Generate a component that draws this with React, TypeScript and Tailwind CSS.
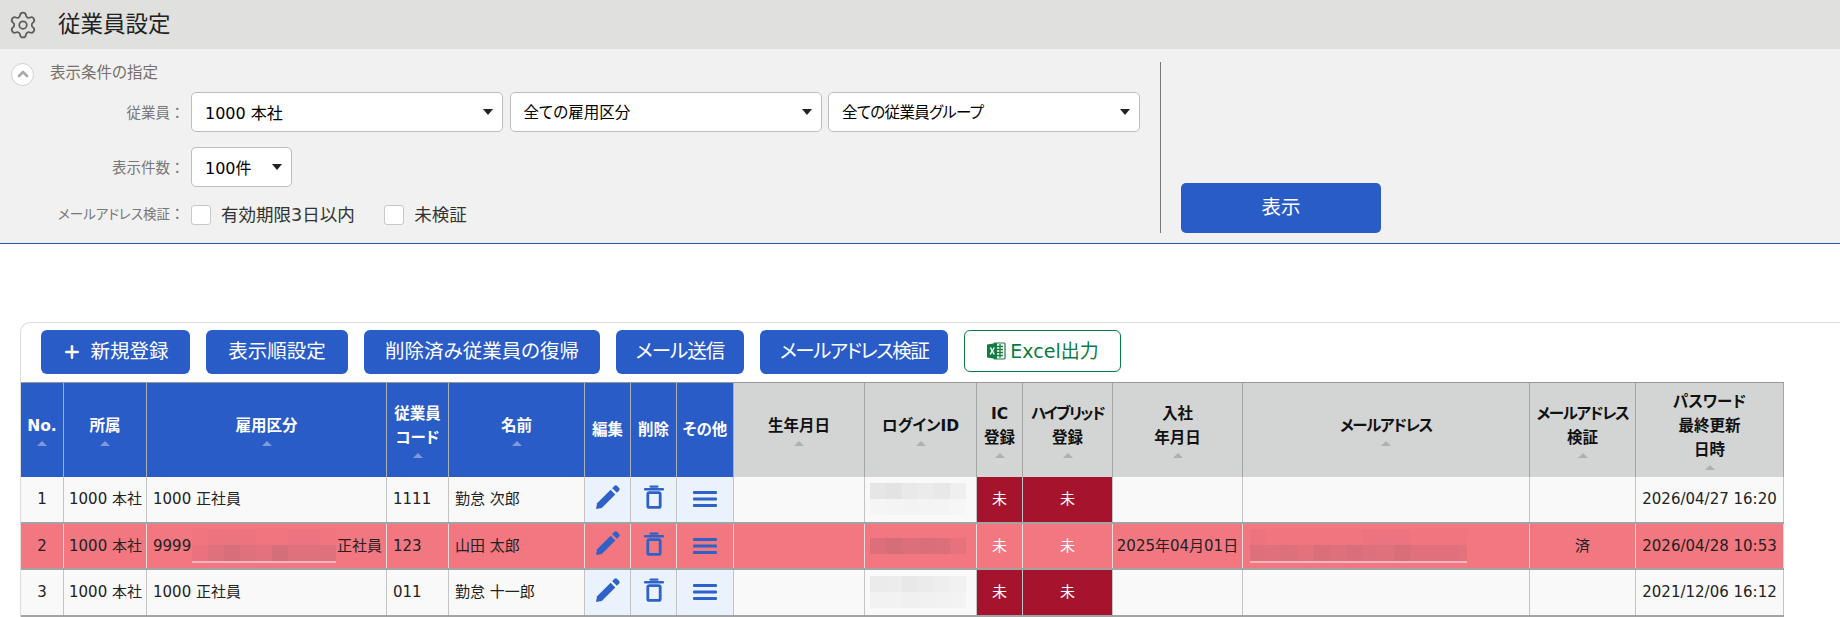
import React from 'react';
import { Settings, ChevronUp, Plus } from 'lucide-react';

// ─── Data ─────────────────────────────────────────────────────────────────────

type Col = { w: string; label: string[]; head: 'blue' | 'gray'; sort?: boolean; track?: string };

const columns: Col[] = [
  { w: 'w-[43px]', label: ['No.'], head: 'blue', sort: true },
  { w: 'w-[83px]', label: ['所属'], head: 'blue', sort: true },
  { w: 'w-[240px]', label: ['雇用区分'], head: 'blue', sort: true },
  { w: 'w-[62px]', label: ['従業員', 'コード'], head: 'blue', sort: true },
  { w: 'w-[136px]', label: ['名前'], head: 'blue', sort: true },
  { w: 'w-[46px]', label: ['編集'], head: 'blue' },
  { w: 'w-[46px]', label: ['削除'], head: 'blue' },
  { w: 'w-[57px]', label: ['その他'], head: 'blue' },
  { w: 'w-[131px]', label: ['生年月日'], head: 'gray', sort: true },
  { w: 'w-[112px]', label: ['ログインID'], head: 'gray', sort: true },
  { w: 'w-[46px]', label: ['IC', '登録'], head: 'gray', sort: true },
  { w: 'w-[90px]', label: ['ハイブリッド', '登録'], head: 'gray', sort: true, track: 'tracking-[-1.7px]' },
  { w: 'w-[130px]', label: ['入社', '年月日'], head: 'gray', sort: true },
  { w: 'w-[287px]', label: ['メールアドレス'], head: 'gray', sort: true, track: 'tracking-[-1.3px]' },
  { w: 'w-[106px]', label: ['メールアドレス', '検証'], head: 'gray', sort: true, track: 'tracking-[-1.3px]' },
  { w: 'w-[148px]', label: ['パスワード', '最終更新', '日時'], head: 'gray', sort: true },
];

const rows = [
  {
    no: '1', org: '1000 本社', kind: '1000 正社員', code: '1111', name: '勤怠 次郎', hired: '', verified: '',
    updated: '2026/04/27 16:20', alert: false,
    login: [
      ['#e6e6e6', '#e3e3e3', '#e9e9e9', '#ebebeb', '#e8e8e8', '#efefef'],
      ['#f5f5f5', '#f4f4f4', '#f3f3f3', '#f4f4f4', '#f4f4f4', '#f6f6f6'],
    ],
  },
  {
    no: '2', org: '1000 本社', kind: '9999', code: '123', name: '山田 太郎', hired: '2025年04月01日', verified: '済',
    updated: '2026/04/28 10:53', alert: true,
    login: [['#dd6f7a', '#d66e78', '#dc6f7a', '#d96f79', '#db6f7a', '#e5727c']],
  },
  {
    no: '3', org: '1000 本社', kind: '1000 正社員', code: '011', name: '勤怠 十一郎', hired: '', verified: '',
    updated: '2021/12/06 16:12', alert: false,
    login: [
      ['#ebebeb', '#ececec', '#e8e8e8', '#ebebeb', '#eeeeee', '#f1f1f1'],
      ['#f2f2f2', '#f2f2f2', '#f0f0f0', '#f1f1f1', '#f2f2f2', '#f3f3f3'],
    ],
  },
];

// ─── Small parts ──────────────────────────────────────────────────────────────

function Select({ label, w = 'w-[312px]', size = 'text-[15.5px]' }: { label: string; w?: string; size?: string }) {
  return (
    <div className={`${w} h-10 flex items-center justify-between pl-[13px] pr-[9px] bg-white border border-[#bdbdbd] rounded-[5px] ${size} text-black`}>
      <span className="pt-[3px]">{label}</span>
      <span className="w-0 h-0 border-x-[5px] border-x-transparent border-t-[6px] border-t-[#222]" />
    </div>
  );
}

// The full-width colon keeps its own width, palt would pull it in
function FieldLabel({ text, size = 'text-[14.5px] pt-[3px]' }: { text: string; size?: string }) {
  return (
    <span className={`w-[173.5px] text-right ${size} text-[#777]`}>
      {text}
      <span className="text-[14.5px] [font-feature-settings:normal]">：</span>
    </span>
  );
}

function Check({ label, className }: { label: string; className?: string }) {
  return (
    <div className={`flex items-center gap-[10px] ${className ?? ''}`}>
      <span className="w-5 h-5 bg-white border border-[#c8c8c8] rounded-[3px]" />
      <span className="text-[17.5px] text-[#333]">{label}</span>
    </div>
  );
}

// Blurred-out values: rows of 16px swatches
function Mosaic({ lines }: { lines: string[][] }) {
  return (
    <span className="flex flex-col">
      {lines.map((line, i) => (
        <span key={i} className="flex h-4">
          {line.map((c, j) => (
            <span key={j} className="block w-4 h-full shrink-0" style={{ background: c }} />
          ))}
        </span>
      ))}
    </span>
  );
}

function ActionButton({ w, track, children }: { w: string; track?: string; children: React.ReactNode }) {
  return (
    <button className={`${w} h-11 flex items-center justify-center gap-2 rounded-[6px] bg-[#2a5cc8] text-white text-[19.5px] ${track ?? ''}`}>
      {children}
    </button>
  );
}

function ExcelIcon() {
  return (
    <svg viewBox="0 0 20 20" className="w-[20px] h-[20px]">
      <rect x="8" y="2" width="11" height="16" rx="1" fill="#fff" stroke="#1d7a45" strokeWidth="1.2" />
      <path d="M11 5.5h6M11 8.5h6M11 11.5h6M11 14.5h6M14 3v14" stroke="#1d7a45" strokeWidth="1.3" />
      <path d="M1 3.5 11 2v16L1 16.5z" fill="#107c41" />
      <path d="M3.7 6.5h1.7L6.3 9l1-2.5h1.6L7.2 10l1.8 3.5H7.3L6.2 11l-1.1 2.5H3.5L5.3 10z" fill="#fff" />
    </svg>
  );
}

function PencilIcon() {
  return (
    <svg viewBox="0 0 24 24" className="w-[25px] h-[25px] mb-1" fill="#2f62c8">
      <path d="M1 23l1-5.5L15 4.5l4.5 4.5L6.5 22z" />
      <path d="M16.5 3 18.5 1a2 2 0 0 1 2.8 0l1.7 1.7a2 2 0 0 1 0 2.8L21 7.5z" />
    </svg>
  );
}

function TrashIcon() {
  return (
    <svg viewBox="0 0 20 24" className="w-[20px] h-[24px] mb-1" fill="none" stroke="#2f62c8">
      <path d="M1 4.2h18" strokeWidth="2.4" strokeLinecap="round" />
      <path d="M6.5 1.6h7" strokeWidth="2.2" strokeLinecap="round" />
      <rect x="3.8" y="7.6" width="12.4" height="14.8" rx="1.5" strokeWidth="2.8" />
    </svg>
  );
}

function MenuIcon() {
  return (
    <svg viewBox="0 0 24 18" className="w-[24px] h-[18px]" fill="#2f62c8">
      <rect y="1" width="24" height="3" rx="1" />
      <rect y="7.5" width="24" height="3" rx="1" />
      <rect y="14" width="24" height="3" rx="1" />
    </svg>
  );
}

// ─── Page ─────────────────────────────────────────────────────────────────────

export default function App() {
  return (
    <div className="w-[1840px] h-[617px] overflow-hidden bg-white font-['DejaVu_Sans','Noto_Sans_CJK_JP',sans-serif] [font-feature-settings:'palt']">
      {/* Title */}
      <div className="h-[49px] bg-[#e0e0de] flex items-center pl-[8px]">
        <Settings className="w-[30px] h-[30px] text-[#5c5c5c]" strokeWidth={1.4} />
        <h1 className="ml-[20px] pt-[1px] text-[22.5px] text-[#222]">従業員設定</h1>
      </div>

      {/* Filter */}
      <div className="h-[195px] bg-[#f1f1f1] border-b border-[#2452b5] flex">
        <div className="w-[1160px] pl-[11px] pt-[13px]">
          <div className="flex items-center h-[24px]">
            <span className="w-[23px] h-[23px] rounded-full bg-white border border-[#d0d0d0] flex items-center justify-center">
              <ChevronUp className="w-4 h-4 text-[#aaa]" strokeWidth={4} />
            </span>
            <span className="ml-[16px] text-[15.5px] text-[#77706a]">表示条件の指定</span>
          </div>
          <div className="flex items-center gap-[6.5px] mt-[6px]">
            <FieldLabel text="従業員" />
            <Select label="1000 本社" size="text-[16px]" />
            <Select label="全ての雇用区分" />
            <Select label="全ての従業員グループ" size="text-[15.5px] tracking-[-0.7px]" />
          </div>
          <div className="flex items-center gap-[6.5px] mt-[15px]">
            <FieldLabel text="表示件数" />
            <Select w="w-[101px]" label="100件" size="text-[16px]" />
          </div>
          <div className="flex items-center gap-[6.5px] mt-[15px]">
            <FieldLabel text="メールアドレス検証" size="text-[13.5px]" />
            <Check label="有効期限3日以内" />
            <Check label="未検証" className="ml-[23px]" />
          </div>
        </div>
        <div className="flex flex-col justify-end h-[171px] mt-[13px] border-l border-[#777] pl-[20px]">
          <button className="w-[200px] h-[50px] rounded-[5px] bg-[#2a5cc8] text-white text-[19.5px]">表示</button>
        </div>
      </div>

      {/* List card */}
      <div className="ml-[20px] mt-[78px] border-l border-t border-[#dcdcdc] rounded-tl-[10px]">
        <div className="h-[59px] flex items-start gap-4 pl-[20px] pt-[7px]">
          <ActionButton w="w-[149px]">
            <Plus className="w-[20px] h-[20px]" strokeWidth={3} />
            新規登録
          </ActionButton>
          <ActionButton w="w-[142px]">表示順設定</ActionButton>
          <ActionButton w="w-[236px]">削除済み従業員の復帰</ActionButton>
          <ActionButton w="w-[128px]" track="tracking-[-1px]">メール送信</ActionButton>
          <ActionButton w="w-[188px]" track="tracking-[-1.5px]">メールアドレス検証</ActionButton>
          <button className="w-[157px] h-[42px] flex items-center justify-center gap-[4px] rounded-[6px] border border-[#0b7a43] text-[#0b7a43] text-[19px]">
            <ExcelIcon />
            Excel出力
          </button>
        </div>
        <div className="w-fit border-t border-[#999]">
          <div className="flex h-[94px]">
            {columns.map((c) => (
              <div
                key={c.label.join('')}
                className={`${c.w} shrink-0 flex flex-col items-center justify-center text-[15.5px] font-bold leading-[24px] border-r ${
                  c.head === 'blue' ? 'bg-[#2a5cc8] text-white border-[#a9b0b8]' : 'bg-[#d3d5d4] text-[#111] border-[#a5a5a5]'
                }`}
              >
                {c.label.map((l) => (
                  <span key={l} className={`whitespace-nowrap ${/[ァ-ヶ]{4}/.test(l) ? c.track ?? '' : ''}`}>{l}</span>
                ))}
                {c.sort && (
                  <span
                    className={`mt-[3px] w-0 h-0 border-x-[5px] border-x-transparent border-b-[5px] ${
                      c.head === 'blue' ? 'border-b-[#7f98d8]' : 'border-b-[#aeb0b2]'
                    }`}
                  />
                )}
              </div>
            ))}
          </div>
          {rows.map((r) => (
            <Row key={r.no} r={r} />
          ))}
        </div>
      </div>
    </div>
  );
}

function Row({ r }: { r: (typeof rows)[number] }) {
  const line = r.alert ? 'border-[#e3dede]' : 'border-[#c4c4c4]';
  const cell = `shrink-0 h-full flex items-center border-r ${line}`;
  const iconBg = r.alert ? '' : 'bg-[#eaf2fd]';
  const red = r.alert ? '' : 'bg-[#a5142c]';
  return (
    <div className={`flex h-[46.5px] border-b-2 border-[#a3a3a3] text-[15px] text-[#222] ${r.alert ? 'bg-[#f27781]' : 'bg-[#f9f9f9]'}`}>
      <div className={`${cell} w-[43px] justify-center`}>{r.no}</div>
      <div className={`${cell} w-[83px] pl-[5px] whitespace-nowrap`}>{r.org}</div>
      <div className={`${cell} w-[240px] pl-[6px] pr-[4px] whitespace-nowrap`}>
        <span>{r.kind}</span>
        {r.alert && (
          <>
            <span className="flex flex-col mx-auto shrink-0">
              <Mosaic
                lines={[
                  ['#f0757f', '#ec747f', '#ec747f', '#ec747f', '#f0757f', '#f0757f', '#ec7480', '#ec7480', '#f0757f'],
                  ['#e8727e', '#df717c', '#d76f7a', '#de717c', '#e2727d', '#d46e79', '#df717c', '#df717c', '#df717c'],
                ]}
              />
              <span className="block h-[2px] bg-[#f7b5ba]" />
            </span>
            <span>正社員</span>
          </>
        )}
      </div>
      <div className={`${cell} w-[62px] pl-[6px]`}>{r.code}</div>
      <div className={`${cell} w-[136px] pl-[6px]`}>{r.name}</div>
      <div className={`${cell} w-[46px] justify-center ${iconBg}`}><PencilIcon /></div>
      <div className={`${cell} w-[46px] justify-center ${iconBg}`}><TrashIcon /></div>
      <div className={`${cell} w-[57px] justify-center ${iconBg}`}><MenuIcon /></div>
      <div className={`${cell} w-[131px]`} />
      <div className={`${cell} w-[112px] pl-[5px]`}>
        <Mosaic lines={r.login} />
      </div>
      <div className={`${cell} w-[46px] justify-center text-white ${red}`}>未</div>
      <div className={`${cell} w-[90px] justify-center text-white ${red}`}>未</div>
      <div className={`${cell} w-[130px] justify-center whitespace-nowrap`}>{r.hired}</div>
      <div className={`${cell} w-[287px] pl-[7px]`}>
        {r.alert && (
          <span className="flex flex-col w-[217px] overflow-hidden">
            <Mosaic
              lines={[
                ['#ec7480', '#f0757f', '#f0757f', '#f0757f', '#f0757f', '#f0757f', '#f0757f', '#ec7480', '#ec7480', '#ec7480', '#f0757f', '#f0757f', '#f0757f', '#f0757f'],
                ['#dd707b', '#e0717c', '#dc707b', '#e4727d', '#da6f7a', '#dd707b', '#d96f7a', '#dc707b', '#df717c', '#d76f79', '#e0717c', '#e0717c', '#e0717c', '#e4727d'],
              ]}
            />
            <span className="block h-[2px] bg-[#f7b5ba]" />
          </span>
        )}
      </div>
      <div className={`${cell} w-[106px] justify-center`}>{r.verified}</div>
      <div className={`${cell} w-[148px] justify-center whitespace-nowrap`}>{r.updated}</div>
    </div>
  );
}
